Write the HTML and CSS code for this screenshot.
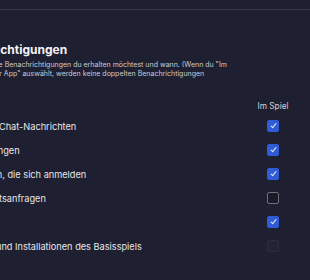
FILE: index.html
```html
<!DOCTYPE html>
<html lang="de">
<head>
    <meta charset="UTF-8">
    <meta name="viewport" content="width=device-width, initial-scale=1.0">
    <title>Benachrichtigungen</title>
    <link rel="stylesheet" href="styles.css">
</head>
<body>
    <div class="topbar"></div>
    <section class="settings">
        <h1 class="title">Benachrichtigungen</h1>
        <p class="desc">Wähle aus, welche Benachrichtigungen du erhalten möchtest und wann. (Wenn du "Im<br>Spiel" oder "In der App" auswählt, werden keine doppelten Benachrichtigungen</p>

        <div class="table">
            <div class="row head">
                <span class="label"></span>
                <span class="col">Im Spiel</span>
            </div>
            <div class="row">
                <span class="label">Eingehende Chat-Nachrichten</span>
                <span class="col"><span class="box on"></span></span>
            </div>
            <div class="row">
                <span class="label">Spieleinladungen</span>
                <span class="col"><span class="box on"></span></span>
            </div>
            <div class="row">
                <span class="label">Bei Freunden, die sich anmelden</span>
                <span class="col"><span class="box on"></span></span>
            </div>
            <div class="row">
                <span class="label">Freundschaftsanfragen</span>
                <span class="col"><span class="box"></span></span>
            </div>
            <div class="row">
                <span class="label">Erfolge</span>
                <span class="col"><span class="box on"></span></span>
            </div>
            <div class="row">
                <span class="label">Downloads und Installationen des Basisspiels</span>
                <span class="col"><span class="box off"></span></span>
            </div>
        </div>
    </section>
</body>
</html>
```

FILE: styles.css
```css
body {
    margin: 0;
    background: #1e1f30;
    font-family: Inter, "Noto Sans", sans-serif;
    color: #e6e6ec;
    overflow: hidden;
}
.topbar {
    height: 9px;
    border-bottom: 1px solid #35374b;
}

/* content is scrolled sideways, the left part is cut */
.settings {
    margin-left: -55px;
    padding-top: 32px;
}
.title {
    margin: 0;
    padding-left: 3px;
    font-size: 12px;
    line-height: 15px;
    font-weight: 700;
    color: #f4f4f7;
}
.desc {
    margin: 3px 0 0 -4px;
    font-size: 7px;
    line-height: 9px;
    color: #cbccd4;
    white-space: nowrap;
}

.table {
    margin-top: 20px;
}
.row {
    display: flex;
    align-items: center;
    height: 24px;
}
.row.head {
    height: 16px;
}
.label {
    flex: 1;
    font-size: 9.2px;
    white-space: nowrap;
}
.col {
    width: 40px;
    margin-right: 17px;
    display: flex;
    justify-content: center;
    font-size: 8.3px;
    color: #d2d3da;
}
.box {
    width: 10px;
    height: 10px;
    border: 1px solid #6c6e7a;
    border-radius: 2px;
    background: #1a1b28;
    position: relative;
}
.box.on {
    background: #2d5cd5;
    border-color: #2d5cd5;
}
.box.on::after {
    content: "";
    position: absolute;
    left: 3.5px;
    top: 1px;
    width: 2px;
    height: 5px;
    border: solid #e8eefc;
    border-width: 0 1px 1px 0;
    transform: rotate(40deg);
}
.box.off {
    border-color: #2c2e40;
    background: #222335;
}
```
